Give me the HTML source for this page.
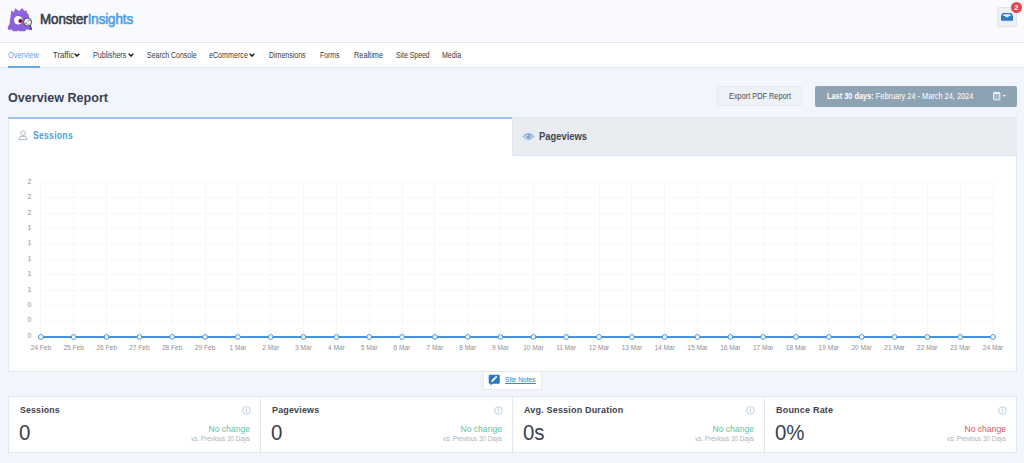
<!DOCTYPE html>
<html><head><meta charset="utf-8">
<style>
*{box-sizing:border-box;margin:0;padding:0}
html,body{width:1024px;height:463px;overflow:hidden;background:#f2f5fd;font-family:"Liberation Sans",sans-serif;color:#393f4c;position:relative}
.abs{position:absolute}
.t{position:absolute;white-space:nowrap;transform-origin:0 0;line-height:1}
#hdr{position:absolute;left:0;top:0;width:1024px;height:43px;background:#f9fafd;border-bottom:1px solid #e4e9f2}
#nav{position:absolute;left:0;top:43px;width:1024px;height:25px;background:#fff;border-bottom:1px solid #e1e7f1}
.ni{font-size:8.3px;color:#353a43}
.chev{position:absolute}
#exp{position:absolute;left:717px;top:86px;width:85px;height:20px;background:#eef1f6;border:1px solid #e7ebf1;border-radius:2px}
#date{position:absolute;left:815px;top:86px;width:202px;height:21px;background:#8da3b4;border-radius:2px}
#panel{position:absolute;left:8px;top:117px;width:1009px;height:255px;background:#fff;border:1px solid #e3e8f0}
#tab2{position:absolute;left:503px;top:-1px;width:505px;height:39px;background:#e9ecf1;border-bottom:1px solid #dee3ea;border-left:1px solid #e0e5ec;border-top:1px solid #e3e8f0}
#tab1line{position:absolute;left:-1px;top:-1px;width:504px;height:2px;background:#9ac5ee}
.xl{font-size:6.6px;fill:#8f8f8f;font-family:"Liberation Sans",sans-serif}
.yl{font-size:6.8px;fill:#8f8f8f;font-family:"Liberation Sans",sans-serif}
#sn{position:absolute;left:483px;top:372px;width:59px;height:18px;background:#fff;border:1px solid #e6ebf3;border-top:none;border-radius:0 0 2px 2px}
#cards{position:absolute;left:8px;top:396px;width:1009px;height:57px;background:#fff;border:1px solid #e1e7f0}
.div{position:absolute;top:0;width:1px;height:55px;background:#e3e8f0}
.ct{font-size:9.5px;font-weight:bold;color:#3d424b}
.cv{font-size:21.5px;color:#393f4c}
.cc{font-size:8.6px;color:#5fc19d;transform-origin:100% 0}
.cc.red{color:#df5660}
.cp{font-size:6.6px;color:#a6b3c0;transform-origin:100% 0}
</style></head><body>
<div id="hdr">
  <svg class="abs" style="left:0;top:0" width="36" height="36" viewBox="0 0 36 36">
    <path d="M10.8 14.5 L11.2 10.8 L13.6 12 L15.4 8.3 L18.9 11.2 L22.3 8 L24.4 11 L26.6 10.6 L26.9 13 L28.7 14.6 L29.1 18 L29 25 L30.6 28.4 L29.6 30.2 L26.6 29.2 L25.2 31.2 L19.2 31.2 L18.3 30.2 L17.4 31.2 L13 31.2 L12 29.8 L8.3 29.8 L7.6 27.2 L9.6 24 L10.2 19 Z" fill="#8b62dc"/>
    <path d="M13 13.5 L15.5 11.5 L18.9 13.5 L22.3 11 L25 13.5" stroke="#9f7ee6" stroke-width="0.8" fill="none" opacity="0.7"/>
    <circle cx="18.2" cy="20.2" r="4.2" fill="#fff"/>
    <circle cx="20.4" cy="20.9" r="2.2" fill="#d9485a"/>
    <circle cx="20.6" cy="21" r="1.4" fill="#1e1a25"/>
    <path d="M29.8 25 L31.2 29.2" stroke="#5a47a8" stroke-width="2" stroke-linecap="round"/>
    <circle cx="27.6" cy="22" r="4" fill="#eef4f4" stroke="#3b3d4c" stroke-width="0.9"/>
    <circle cx="25.9" cy="23.4" r="0.95" fill="#3fbf8a"/><circle cx="29" cy="20.4" r="0.9" fill="#e2566a"/><circle cx="27.9" cy="24.5" r="0.9" fill="#f0a048"/><path d="M26 23.3 L27.5 21.5 L29 20.4" stroke="#a8c9d8" stroke-width="0.5" fill="none"/>
  </svg>
  <div class="t" id="logo" style="left:39.5px;top:13px;transform:scaleX(0.97);font-size:13.8px;font-weight:normal;-webkit-text-stroke:0.6px currentColor;letter-spacing:-0.1px"><span style="color:#393f4c">Monster</span><span style="color:#509fe2">Insights</span></div>
  <div class="abs" style="left:997px;top:7px;width:20px;height:20px;background:#eff0f3;border:1px solid #e2e4e8;border-radius:2px"></div>
  <svg class="abs" style="left:1000px;top:12px" width="14" height="10" viewBox="0 0 14 10"><path d="M3.2 1 H10.8 Q11.4 1 11.8 1.6 L13 4 V8 Q13 8.8 12.2 8.8 H1.8 Q1 8.8 1 8 V4 L2.2 1.6 Q2.6 1 3.2 1 Z M3 4 H5 L5.8 5.2 H8.2 L9 4 H11 L10.2 2.3 H3.8 Z" fill="#2c78cb" fill-rule="evenodd"/></svg>
  <div class="abs" style="left:1011px;top:1.8px;width:11px;height:11px;border-radius:50%;background:#e4474d"></div>
  <div class="t" style="left:1014.3px;top:4px;font-size:7.4px;font-weight:bold;color:#fff">2</div>
</div>
<div id="nav"></div>
<div class="t ni" style="left:8px;top:51.4px;color:#62a5e4;transform:scaleX(0.89)">Overview</div>
<div class="t ni" style="left:52.5px;top:51.4px;transform:scaleX(0.93)">Traffic</div>
<div class="t ni" style="left:93px;top:51.4px;transform:scaleX(0.86)">Publishers</div>
<div class="t ni" style="left:146.5px;top:51.4px;transform:scaleX(0.84)">Search Console</div>
<div class="t ni" style="left:209.2px;top:51.4px;transform:scaleX(0.86)">eCommerce</div>
<div class="t ni" style="left:269px;top:51.4px;transform:scaleX(0.845)">Dimensions</div>
<div class="t ni" style="left:320px;top:51.4px;transform:scaleX(0.83)">Forms</div>
<div class="t ni" style="left:353.5px;top:51.4px;transform:scaleX(0.885)">Realtime</div>
<div class="t ni" style="left:395.5px;top:51.4px;transform:scaleX(0.83)">Site Speed</div>
<div class="t ni" style="left:442.3px;top:51.4px;transform:scaleX(0.85)">Media</div>
<svg class="chev" style="left:73.8px;top:53.1px" width="6" height="4" viewBox="0 0 6 4"><path d="M0.7 0.7 L3 3 L5.3 0.7" stroke="#1f2328" stroke-width="1.6" fill="none"/></svg>
<svg class="chev" style="left:127.5px;top:53.1px" width="6" height="4" viewBox="0 0 6 4"><path d="M0.7 0.7 L3 3 L5.3 0.7" stroke="#1f2328" stroke-width="1.6" fill="none"/></svg>
<svg class="chev" style="left:249.3px;top:53.1px" width="6" height="4" viewBox="0 0 6 4"><path d="M0.7 0.7 L3 3 L5.3 0.7" stroke="#1f2328" stroke-width="1.6" fill="none"/></svg>
<div class="abs" style="left:8px;top:66px;width:32px;height:2px;background:#6aaae4"></div>
<div class="t" id="title" style="left:8px;top:91px;font-size:13.6px;font-weight:bold;color:#393f4c;transform:scaleX(0.926)">Overview Report</div>
<div id="exp"></div>
<div class="t" style="left:728.5px;top:91.5px;font-size:8.6px;color:#4a4f58;transform:scaleX(0.855)">Export PDF Report</div>
<div id="date"></div>
<div class="t" style="left:826.5px;top:91.5px;font-size:8.6px;color:#fff;transform:scaleX(0.858)"><b>Last 30 days:</b> February 24 - March 24, 2024</div>
<svg class="abs" style="left:985px;top:86px" width="25" height="20" viewBox="0 0 25 20"><rect x="8.5" y="6.6" width="6.4" height="7.2" rx="0.7" fill="rgba(255,255,255,0.25)" stroke="#eef2f5" stroke-width="1"/><path d="M8.2 7.4 H15.2" stroke="#eef2f5" stroke-width="1.3"/><path d="M10 5.6 V6.8 M13.4 5.6 V6.8" stroke="#eef2f5" stroke-width="0.9"/><path d="M17.5 9.1 H21 L19.25 11.1 Z" fill="#eef2f5"/></svg>
<div id="panel"><div id="tab1line"></div><div id="tab2"></div></div>
<svg class="abs" style="left:18px;top:130px" width="10" height="11" viewBox="0 0 10 11"><circle cx="5" cy="3.2" r="2.4" fill="none" stroke="#acb9c8" stroke-width="1"/><path d="M1 9.6 Q1 6.2 5 6.2 Q9 6.2 9 9.6 Z" fill="none" stroke="#acb9c8" stroke-width="1" stroke-linejoin="round"/></svg>
<div class="t" style="left:33px;top:130.8px;font-size:10.2px;font-weight:bold;letter-spacing:0.35px;color:#509fe2;transform:scaleX(0.84)">Sessions</div>
<svg class="abs" style="left:522px;top:131.5px" width="13" height="9" viewBox="0 0 13 9"><path d="M1.2 4.5 Q6.5 -1.2 11.8 4.5 Q6.5 10.2 1.2 4.5 Z" fill="#d2e0ee" stroke="#8eb0d3" stroke-width="1.1"/><circle cx="6.5" cy="4.3" r="2.2" fill="#80a7cf"/><circle cx="5.6" cy="3.4" r="0.7" fill="#dce8f3"/></svg>
<div class="t" style="left:538.5px;top:131.5px;font-size:10px;font-weight:bold;color:#41464f;transform:scaleX(0.94)">Pageviews</div>
<svg class="abs" style="left:0;top:0" width="1024" height="463" viewBox="0 0 1024 463">
<path d="M40.5 182V336 M73.5 182V336 M106.5 182V336 M139.5 182V336 M172.5 182V336 M205.5 182V336 M237.5 182V336 M270.5 182V336 M303.5 182V336 M336.5 182V336 M369.5 182V336 M402.5 182V336 M434.5 182V336 M467.5 182V336 M500.5 182V336 M533.5 182V336 M566.5 182V336 M599.5 182V336 M631.5 182V336 M664.5 182V336 M697.5 182V336 M730.5 182V336 M763.5 182V336 M796.5 182V336 M828.5 182V336 M861.5 182V336 M894.5 182V336 M927.5 182V336 M960.5 182V336 M993.5 182V336 M40.5 182.5H993 M40.5 197.5H993 M40.5 213.5H993 M40.5 228.5H993 M40.5 244.5H993 M40.5 259.5H993 M40.5 274.5H993 M40.5 290.5H993 M40.5 305.5H993 M40.5 321.5H993" stroke="#f6f7fa" stroke-width="1" fill="none"/>
<path d="M40.9 337H993" stroke="#4893dc" stroke-width="2.1" fill="none"/>
<circle cx="40.9" cy="337" r="2.4" fill="#fff" stroke="#4692dc" stroke-width="1"/>
<circle cx="73.7" cy="337" r="2.4" fill="#fff" stroke="#4692dc" stroke-width="1"/>
<circle cx="106.6" cy="337" r="2.4" fill="#fff" stroke="#4692dc" stroke-width="1"/>
<circle cx="139.4" cy="337" r="2.4" fill="#fff" stroke="#4692dc" stroke-width="1"/>
<circle cx="172.2" cy="337" r="2.4" fill="#fff" stroke="#4692dc" stroke-width="1"/>
<circle cx="205.1" cy="337" r="2.4" fill="#fff" stroke="#4692dc" stroke-width="1"/>
<circle cx="237.9" cy="337" r="2.4" fill="#fff" stroke="#4692dc" stroke-width="1"/>
<circle cx="270.7" cy="337" r="2.4" fill="#fff" stroke="#4692dc" stroke-width="1"/>
<circle cx="303.5" cy="337" r="2.4" fill="#fff" stroke="#4692dc" stroke-width="1"/>
<circle cx="336.4" cy="337" r="2.4" fill="#fff" stroke="#4692dc" stroke-width="1"/>
<circle cx="369.2" cy="337" r="2.4" fill="#fff" stroke="#4692dc" stroke-width="1"/>
<circle cx="402.0" cy="337" r="2.4" fill="#fff" stroke="#4692dc" stroke-width="1"/>
<circle cx="434.9" cy="337" r="2.4" fill="#fff" stroke="#4692dc" stroke-width="1"/>
<circle cx="467.7" cy="337" r="2.4" fill="#fff" stroke="#4692dc" stroke-width="1"/>
<circle cx="500.5" cy="337" r="2.4" fill="#fff" stroke="#4692dc" stroke-width="1"/>
<circle cx="533.4" cy="337" r="2.4" fill="#fff" stroke="#4692dc" stroke-width="1"/>
<circle cx="566.2" cy="337" r="2.4" fill="#fff" stroke="#4692dc" stroke-width="1"/>
<circle cx="599.0" cy="337" r="2.4" fill="#fff" stroke="#4692dc" stroke-width="1"/>
<circle cx="631.9" cy="337" r="2.4" fill="#fff" stroke="#4692dc" stroke-width="1"/>
<circle cx="664.7" cy="337" r="2.4" fill="#fff" stroke="#4692dc" stroke-width="1"/>
<circle cx="697.5" cy="337" r="2.4" fill="#fff" stroke="#4692dc" stroke-width="1"/>
<circle cx="730.4" cy="337" r="2.4" fill="#fff" stroke="#4692dc" stroke-width="1"/>
<circle cx="763.2" cy="337" r="2.4" fill="#fff" stroke="#4692dc" stroke-width="1"/>
<circle cx="796.0" cy="337" r="2.4" fill="#fff" stroke="#4692dc" stroke-width="1"/>
<circle cx="828.8" cy="337" r="2.4" fill="#fff" stroke="#4692dc" stroke-width="1"/>
<circle cx="861.7" cy="337" r="2.4" fill="#fff" stroke="#4692dc" stroke-width="1"/>
<circle cx="894.5" cy="337" r="2.4" fill="#fff" stroke="#4692dc" stroke-width="1"/>
<circle cx="927.3" cy="337" r="2.4" fill="#fff" stroke="#4692dc" stroke-width="1"/>
<circle cx="960.2" cy="337" r="2.4" fill="#fff" stroke="#4692dc" stroke-width="1"/>
<circle cx="993.0" cy="337" r="2.4" fill="#fff" stroke="#4692dc" stroke-width="1"/>
<text x="40.9" y="350.2" text-anchor="middle" class="xl">24 Feb</text>
<text x="73.7" y="350.2" text-anchor="middle" class="xl">25 Feb</text>
<text x="106.6" y="350.2" text-anchor="middle" class="xl">26 Feb</text>
<text x="139.4" y="350.2" text-anchor="middle" class="xl">27 Feb</text>
<text x="172.2" y="350.2" text-anchor="middle" class="xl">28 Feb</text>
<text x="205.1" y="350.2" text-anchor="middle" class="xl">29 Feb</text>
<text x="237.9" y="350.2" text-anchor="middle" class="xl">1 Mar</text>
<text x="270.7" y="350.2" text-anchor="middle" class="xl">2 Mar</text>
<text x="303.5" y="350.2" text-anchor="middle" class="xl">3 Mar</text>
<text x="336.4" y="350.2" text-anchor="middle" class="xl">4 Mar</text>
<text x="369.2" y="350.2" text-anchor="middle" class="xl">5 Mar</text>
<text x="402.0" y="350.2" text-anchor="middle" class="xl">6 Mar</text>
<text x="434.9" y="350.2" text-anchor="middle" class="xl">7 Mar</text>
<text x="467.7" y="350.2" text-anchor="middle" class="xl">8 Mar</text>
<text x="500.5" y="350.2" text-anchor="middle" class="xl">9 Mar</text>
<text x="533.4" y="350.2" text-anchor="middle" class="xl">10 Mar</text>
<text x="566.2" y="350.2" text-anchor="middle" class="xl">11 Mar</text>
<text x="599.0" y="350.2" text-anchor="middle" class="xl">12 Mar</text>
<text x="631.9" y="350.2" text-anchor="middle" class="xl">13 Mar</text>
<text x="664.7" y="350.2" text-anchor="middle" class="xl">14 Mar</text>
<text x="697.5" y="350.2" text-anchor="middle" class="xl">15 Mar</text>
<text x="730.4" y="350.2" text-anchor="middle" class="xl">16 Mar</text>
<text x="763.2" y="350.2" text-anchor="middle" class="xl">17 Mar</text>
<text x="796.0" y="350.2" text-anchor="middle" class="xl">18 Mar</text>
<text x="828.8" y="350.2" text-anchor="middle" class="xl">19 Mar</text>
<text x="861.7" y="350.2" text-anchor="middle" class="xl">20 Mar</text>
<text x="894.5" y="350.2" text-anchor="middle" class="xl">21 Mar</text>
<text x="927.3" y="350.2" text-anchor="middle" class="xl">22 Mar</text>
<text x="960.2" y="350.2" text-anchor="middle" class="xl">23 Mar</text>
<text x="993.0" y="350.2" text-anchor="middle" class="xl">24 Mar</text>
<text x="31.3" y="183.8" text-anchor="end" class="yl">2</text>
<text x="31.3" y="199.2" text-anchor="end" class="yl">2</text>
<text x="31.3" y="214.6" text-anchor="end" class="yl">2</text>
<text x="31.3" y="230.0" text-anchor="end" class="yl">1</text>
<text x="31.3" y="245.4" text-anchor="end" class="yl">1</text>
<text x="31.3" y="260.8" text-anchor="end" class="yl">1</text>
<text x="31.3" y="276.2" text-anchor="end" class="yl">1</text>
<text x="31.3" y="291.6" text-anchor="end" class="yl">1</text>
<text x="31.3" y="307.0" text-anchor="end" class="yl">0</text>
<text x="31.3" y="322.4" text-anchor="end" class="yl">0</text>
<text x="31.3" y="337.8" text-anchor="end" class="yl">0</text>
</svg>
<div id="sn"></div>
<svg class="abs" style="left:488px;top:374px" width="13" height="13" viewBox="0 0 13 13"><path d="M1.8 0.7 H10.6 Q11.8 0.7 11.8 1.9 V8.6 Q11.8 9.8 10.6 9.8 H4.6 L2.6 11.8 L2.7 9.8 H1.8 Q0.7 9.8 0.7 8.6 V1.9 Q0.7 0.7 1.8 0.7 Z" fill="#2b78c5"/><path d="M3.2 8 L3.6 6.3 L7.6 2.3 Q8.2 1.8 8.8 2.3 L9 2.5 Q9.4 3.1 8.9 3.6 L4.9 7.6 Z" fill="#fff"/><path d="M7 2.9 L8.4 4.3" stroke="#2b78c5" stroke-width="0.5"/></svg>
<div class="t" style="left:504.5px;top:376.3px;font-size:7.7px;color:#3a7cc2;transform:scaleX(0.86)">Site Notes</div><div class="abs" style="left:504.5px;top:383px;width:31.5px;height:1px;background:#4a86c6"></div>
<div id="cards"><div class="div" style="left:251px"></div><div class="div" style="left:503px"></div><div class="div" style="left:755px"></div></div>
<div class="t ct" style="left:19.5px;top:405.4px;letter-spacing:0.2px;transform:scaleX(0.92)">Sessions</div>
<div class="t cv" style="left:19px;top:423px;transform:scaleX(0.95)">0</div>
<div class="t cc" style="right:774px;top:425px">No change</div>
<div class="t cp" style="right:774px;top:436.3px;transform:scaleX(0.95)">vs. Previous 30 Days</div>
<svg class="abs" style="left:241.5px;top:405.6px" width="9" height="9" viewBox="0 0 9 9"><circle cx="4.5" cy="4.5" r="3.8" fill="none" stroke="#b6cae2" stroke-width="0.9"/><path d="M4.5 2.6V6.6" stroke="#b6cae2" stroke-width="0.9"/></svg>
<div class="t ct" style="left:271.5px;top:405.4px;letter-spacing:0.2px;transform:scaleX(0.94)">Pageviews</div>
<div class="t cv" style="left:271px;top:423px;transform:scaleX(0.95)">0</div>
<div class="t cc" style="right:522px;top:425px">No change</div>
<div class="t cp" style="right:522px;top:436.3px;transform:scaleX(0.95)">vs. Previous 30 Days</div>
<svg class="abs" style="left:493.5px;top:405.6px" width="9" height="9" viewBox="0 0 9 9"><circle cx="4.5" cy="4.5" r="3.8" fill="none" stroke="#b6cae2" stroke-width="0.9"/><path d="M4.5 2.6V6.6" stroke="#b6cae2" stroke-width="0.9"/></svg>
<div class="t ct" style="left:523.5px;top:405.4px;letter-spacing:0.2px;transform:scaleX(0.945)">Avg. Session Duration</div>
<div class="t cv" style="left:523px;top:423px;transform:scaleX(0.95)">0s</div>
<div class="t cc" style="right:270px;top:425px">No change</div>
<div class="t cp" style="right:270px;top:436.3px;transform:scaleX(0.95)">vs. Previous 30 Days</div>
<svg class="abs" style="left:745.5px;top:405.6px" width="9" height="9" viewBox="0 0 9 9"><circle cx="4.5" cy="4.5" r="3.8" fill="none" stroke="#b6cae2" stroke-width="0.9"/><path d="M4.5 2.6V6.6" stroke="#b6cae2" stroke-width="0.9"/></svg>
<div class="t ct" style="left:775.5px;top:405.4px;letter-spacing:0.2px;transform:scaleX(0.95)">Bounce Rate</div>
<div class="t cv" style="left:775px;top:423px;transform:scaleX(0.95)">0%</div>
<div class="t cc red" style="right:18px;top:425px">No change</div>
<div class="t cp" style="right:18px;top:436.3px;transform:scaleX(0.95)">vs. Previous 30 Days</div>
<svg class="abs" style="left:997.5px;top:405.6px" width="9" height="9" viewBox="0 0 9 9"><circle cx="4.5" cy="4.5" r="3.8" fill="none" stroke="#b6cae2" stroke-width="0.9"/><path d="M4.5 2.6V6.6" stroke="#b6cae2" stroke-width="0.9"/></svg>
</body></html>
